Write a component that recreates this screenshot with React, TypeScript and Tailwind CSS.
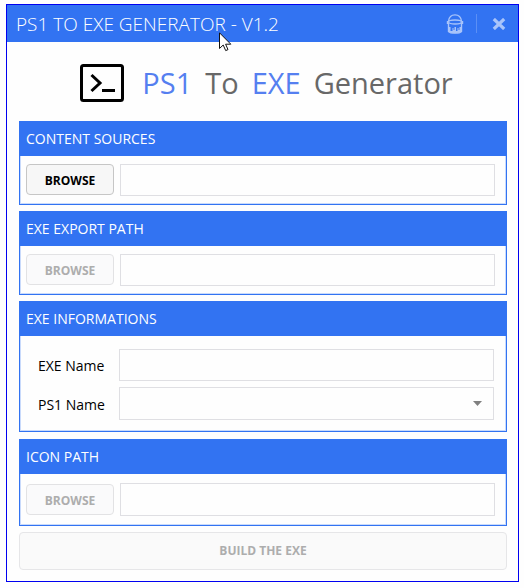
import type { InputHTMLAttributes, ReactNode } from "react";

function TerminalIcon() {
  return (
    <svg width="44" height="38" viewBox="0 0 44 38" fill="none" stroke="#000" aria-hidden="true">
      <rect x="1.5" y="1.5" width="41" height="35" rx="2" strokeWidth="3" />
      <path d="M11.500 11L20 19L11.500 27" strokeWidth="3" />
      <path d="M22 26.500H35" strokeWidth="3" />
    </svg>
  );
}

function BucketIcon() {
  return (
    <svg width="18" height="20" viewBox="0 0 18 20" fill="none" stroke="currentColor" aria-hidden="true">
      <path d="M2.500 7C3 3 5.500 .800 9 .800S15 3 15.500 7" strokeWidth="1.3" />
      <ellipse cx="9" cy="8" rx="6.500" ry="2" strokeWidth="1.3" />
      <path d="M1.500 7v3M16.500 7v3" strokeWidth="1.4" />
      <path d="M2.500 9V17.500C4.500 19.700 13.500 19.700 15.500 17.500V9" strokeWidth="1.4" />
      <path d="M3 13H4.500V17H6.500V14H7.500V16H8.500V13H10V17H11.500V14H12.500V16H13.500V13H15V18C12 19.500 6 19.500 3 18Z" fill="currentColor" stroke="none" />
    </svg>
  );
}

function CloseIcon() {
  return (
    <svg width="14" height="12" viewBox="0 0 14 12" fill="none" stroke="currentColor" aria-hidden="true">
      <path d="M1.800 1L12.200 11M12.200 1L1.800 11" strokeWidth="3.2" />
    </svg>
  );
}

function Pointer() {
  return (
    <svg
      className="pointer-events-none absolute left-[219px] top-8"
      width="13"
      height="20"
      viewBox="0 0 13 20"
      aria-hidden="true"
    >
      <path
        d="M.5 .8V16.500L4.200 13L6.700 18.600L9 17.600L6.600 12.200H11.800Z"
        fill="#fff"
        stroke="#111"
        strokeWidth="1"
      />
    </svg>
  );
}

function Section({ title, className, children }: { title: string; className: string; children: ReactNode }) {
  return (
    <section className={`border border-t-0 border-[#3273f2] shadow-[inset_0_0_0_1px_#c9dafb] ${className}`}>
      <h2 className="-mx-px h-[35px] bg-[#3273f2] pl-[7px] text-sm leading-9 text-white">{title}</h2>
      {children}
    </section>
  );
}

function Field({ className = "h-8", ...props }: InputHTMLAttributes<HTMLInputElement>) {
  return (
    <input
      type="text"
      className={`min-w-0 flex-1 border border-[#dfdfe3] bg-[#fefefe] px-2 text-sm outline-none ${className}`}
      {...props}
    />
  );
}

function Browse({ disabled = false }: { disabled?: boolean }) {
  return (
    <button
      type="button"
      disabled={disabled}
      className="h-[31px] w-[88px] rounded border border-[#c6c6c6] bg-[#f7f7f7] pt-0.5 text-xs font-bold text-black disabled:border-[#e2e2e4] disabled:bg-[#fafafb] disabled:text-[#adadad]"
    >
      BROWSE
    </button>
  );
}

export default function App() {
  return (
    <div className="relative bg-[#fefefe] pt-1 pr-[5px] pb-1.5 pl-1.5 font-['Open_Sans','Noto_Sans',sans-serif]">
      <main className="border border-[#0000f0] pb-[11px]">
        <header className="flex h-[37px] items-center bg-[#3273f2] text-[#a9c4fa]">
          <h1 className="flex-1 pl-[9px] text-[19px] font-light leading-6 text-white">
            PS1 TO EXE GENERATOR - V1.2
          </h1>
          <button type="button" aria-label="Theme" className="mr-3">
            <BucketIcon />
          </button>
          <span className="h-[19px] w-px bg-[#5b8ff5]" />
          <button type="button" aria-label="Close" className="mr-3 ml-[15px]">
            <CloseIcon />
          </button>
        </header>

        <div className="flex h-[79px] items-center justify-center gap-[18px] pt-0.5 pl-2">
          <TerminalIcon />
          <p className="flex gap-[13px] text-[29px] leading-9 text-[#686868]">
            <span className="text-[#557ff0]">PS1</span>
            <span>To</span>
            <span className="text-[#557ff0]">EXE</span>
            <span>Generator</span>
          </p>
        </div>

        <form className="pr-[11px] pl-3" onSubmit={(e) => e.preventDefault()}>
          <Section title="CONTENT SOURCES" className="mb-1.5">
            <div className="flex gap-1.5 py-2 pr-[11px] pl-1.5">
              <Browse />
              <Field aria-label="Content sources" />
            </div>
          </Section>

          <Section title="EXE EXPORT PATH" className="mb-1.5">
            <div className="flex gap-1.5 py-2 pr-[11px] pl-1.5">
              <Browse disabled />
              <Field aria-label="EXE export path" />
            </div>
          </Section>

          <Section title="EXE INFORMATIONS" className="mb-[7px]">
            <div className="flex flex-col gap-1.5 pt-[13px] pr-3 pb-[11px] pl-[18px] text-sm">
              <div className="flex items-center">
                <label htmlFor="exe-name" className="w-[81px] pt-0.5">
                  EXE Name
                </label>
                <Field id="exe-name" />
              </div>
              <div className="flex items-center">
                <label htmlFor="ps1-name" className="w-[81px] pt-0.5">
                  PS1 Name
                </label>
                <div className="relative flex flex-1">
                  <select
                    id="ps1-name"
                    className="h-[33px] flex-1 appearance-none border border-[#dfdfe3] bg-[#fefefe] px-2 text-sm outline-none"
                  />
                  <svg
                    className="pointer-events-none absolute top-3.5 right-3"
                    width="9"
                    height="5"
                    viewBox="0 0 9 5"
                    aria-hidden="true"
                  >
                    <path d="M0 0H9L4.500 5Z" fill="#808080" />
                  </svg>
                </div>
              </div>
            </div>
          </Section>

          <Section title="ICON PATH" className="mb-1.5">
            <div className="flex items-center gap-1.5 py-[9px] pr-[11px] pl-1.5">
              <Browse disabled />
              <Field aria-label="Icon path" className="h-[33px]" />
            </div>
          </Section>

          <button
            type="submit"
            disabled
            className="block h-[38px] w-full rounded border border-[#e6e6e8] bg-[#fafafa] text-xs font-bold text-[#adadad]"
          >
            BUILD THE EXE
          </button>
        </form>
      </main>
      <Pointer />
    </div>
  );
}
